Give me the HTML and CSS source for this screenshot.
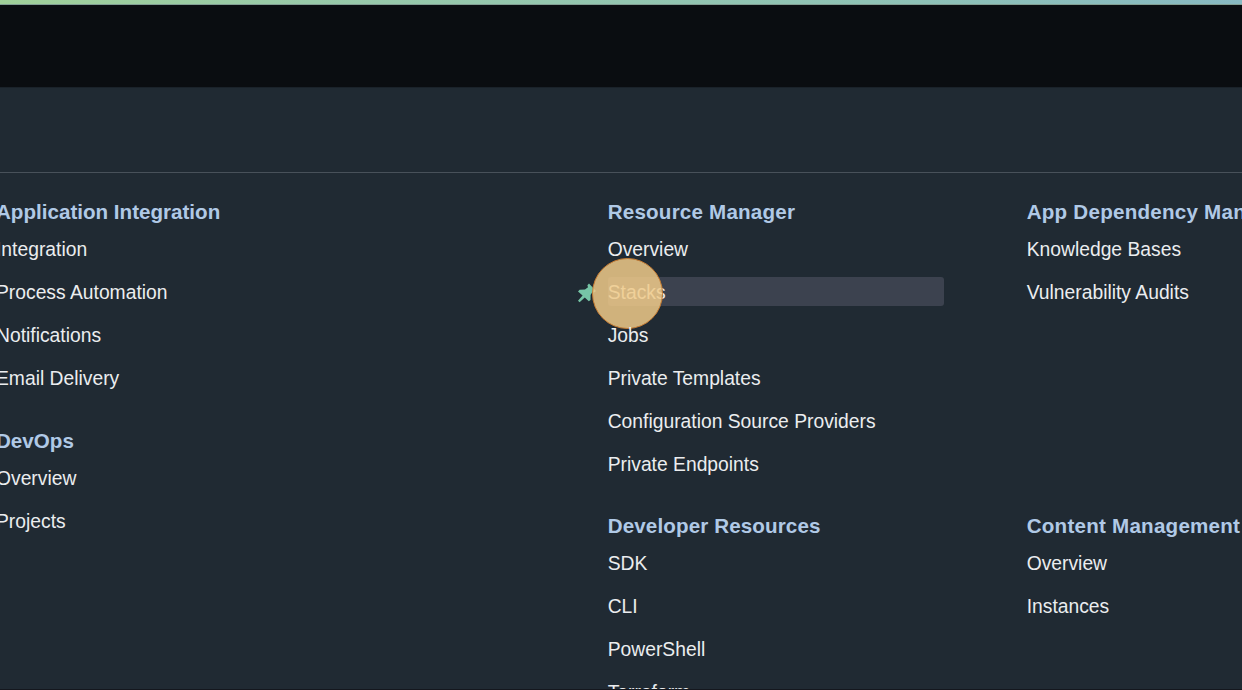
FILE: index.html
```html
<!DOCTYPE html>
<html lang="en">
<head>
<meta charset="utf-8">
<title>Developer Services</title>
<link rel="stylesheet" href="styles.css">
</head>
<body>
<div class="accent"></div>
<header class="topbar"></header>
<main class="menu">
  <div class="menu-head"></div>
  <div class="columns">
    <div class="column">
      <section class="group">
        <h2>Application Integration</h2>
        <ul><li>Integration</li><li>Process Automation</li><li>Notifications</li><li>Email Delivery</li></ul>
      </section>
      <section class="group">
        <h2>DevOps</h2>
        <ul><li>Overview</li><li>Projects</li></ul>
      </section>
    </div>
    <div class="column column-wide">
      <section class="group group-tall">
        <h2>Resource Manager</h2>
        <ul>
          <li>Overview</li>
          <li class="active"><span>Stacks</span>
            <svg class="pin" width="20" height="20" viewBox="0 0 20 20"><path d="M12 .5 19 8 17 9.5 15.2 9.2 13.6 12 13.5 17 11.8 18.2 7.8 14.4 2.6 19.2 1 17.8 5.6 12.5 1 8.4 2.6 6.8 8 6.4 11 4.2 10.4 2.2Z"/></svg>
            <i class="click-marker"></i>
          </li>
          <li>Jobs</li><li>Private Templates</li><li>Configuration Source Providers</li><li>Private Endpoints</li>
        </ul>
      </section>
      <section class="group">
        <h2>Developer Resources</h2>
        <ul><li>SDK</li><li>CLI</li><li>PowerShell</li><li>Terraform</li></ul>
      </section>
    </div>
    <div class="column column-wide">
      <section class="group group-tall">
        <h2>App Dependency Management</h2>
        <ul><li>Knowledge Bases</li><li>Vulnerability Audits</li></ul>
      </section>
      <section class="group">
        <h2>Content Management</h2>
        <ul><li>Overview</li><li>Instances</li></ul>
      </section>
    </div>
  </div>
</main>
</body>
</html>
```
FILE: styles.css
```css
* { box-sizing: border-box; }
body {
  margin: 0;
  height: 690px;
  overflow: hidden;
  display: flex;
  flex-direction: column;
  background: #202a33;
  color: #ebedef;
  font-family: "Liberation Sans", Arial, sans-serif;
}
.accent {
  flex: none;
  height: 5px;
  background: linear-gradient(90deg, #a0d09a, #98c9a9 25%, #8fc2b5 70%, #88b9c2);
  border-bottom: 1px solid #829f94;
}
.topbar { flex: none; height: 82px; background: #0a0d11; }
.menu {
  flex: 1;
  min-height: 0;
  overflow: hidden;
  border-top: 1px solid #1a222a;
  border-bottom: 1px solid #14171e;
}
.menu-head { height: 85px; border-bottom: 1px solid #48515a; }
.columns {
  display: grid;
  grid-template-columns: 611.7px 419px 419px;
  margin-left: -4px;
  padding-top: 23px;
}
.group { margin-bottom: 25px; }
.group-tall { height: 289px; }
h2 {
  margin: 0;
  font-size: 20.6px;
  line-height: 32px;
  font-weight: 700;
  color: #b0c9e6;
  white-space: nowrap;
}
.column-wide h2 { letter-spacing: .12px; }
.column-wide .group-tall h2 { letter-spacing: .2px; }
.column-wide:last-child h2 { letter-spacing: .23px; }
ul { list-style: none; margin: 0; padding: 0; }
li { position: relative; font-size: 19.3px; line-height: 43px; white-space: nowrap; }
.active { display: flex; align-items: flex-start; height: 43px; padding-top: 6px; }
.active span {
  width: 336.5px;
  height: 29px;
  line-height: 31px;
  border-radius: 3px;
  background: #3c424f;
}
.pin { position: absolute; left: -31px; top: 12px; fill: #76c5a6; }
.click-marker {
  position: absolute;
  left: -15.7px;
  top: -13px;
  width: 71px;
  height: 71px;
  border: 1.5px solid #c47b32;
  border-radius: 50%;
  background: rgba(240, 202, 137, .85);
}
```
